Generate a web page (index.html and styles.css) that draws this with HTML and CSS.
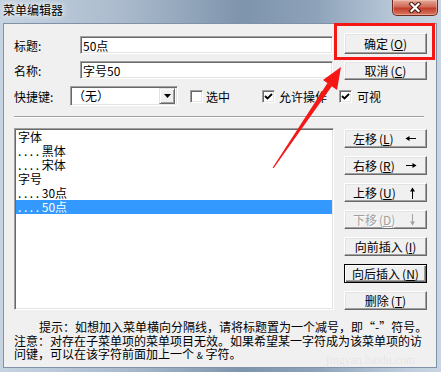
FILE: index.html
```html
<!DOCTYPE html>
<html lang="zh-CN">
<head>
  <meta charset="UTF-8" />
  <meta name="viewport" content="width=device-width, initial-scale=1.0" />
  <title>菜单编辑器</title>
  <link rel="stylesheet" href="styles.css">
</head>
<body>
  <div class="window">
    <div class="titlebar">
      <span class="title">菜单编辑器</span>
      <div class="close-btn">
        <svg width="14" height="11" viewBox="0 0 14 11">
          <path d="M3.5 2 L10.5 9 M10.5 2 L3.5 9" stroke="#4a1710" stroke-width="4.2" stroke-linecap="square" fill="none"/>
          <path d="M3.5 2 L10.5 9 M10.5 2 L3.5 9" stroke="#fff" stroke-width="2.2" stroke-linecap="square" fill="none"/>
        </svg>
      </div>
    </div>

    <div class="client">
      <div class="top">
        <div class="form">
          <div class="row">
            <label class="lbl">标题:</label>
            <input class="field" type="text" value="50点">
          </div>
          <div class="row">
            <label class="lbl">名称:</label>
            <input class="field" type="text" value="字号50">
          </div>
          <div class="row row-opts">
            <label class="lbl lbl-short">快捷键:</label>
            <div class="combo">
              <span class="combo-text">（无）</span>
              <span class="combo-btn">
                <svg width="7" height="4" viewBox="0 0 7 4"><path d="M0 0H7L3.5 4Z" fill="#000"/></svg>
              </span>
            </div>
            <span class="check check-first"><span class="box"></span>选中</span>
            <span class="check check-mid">
              <span class="box"><svg width="9" height="9" viewBox="0 0 9 9"><path d="M1 4 L3.5 6.5 L8 2" stroke="#000" stroke-width="1.8" fill="none"/></svg></span>允许操作
            </span>
            <span class="check check-last">
              <span class="box"><svg width="9" height="9" viewBox="0 0 9 9"><path d="M1 4 L3.5 6.5 L8 2" stroke="#000" stroke-width="1.8" fill="none"/></svg></span>可视
            </span>
          </div>
        </div>
        <div class="btns">
          <button class="btn btn-ok">确定<span class="key">(<u>O</u>)</span></button>
          <button class="btn">取消<span class="key">(<u>C</u>)</span></button>
        </div>
      </div>

      <div class="sep"></div>

      <div class="middle">
        <div class="list">
          <div class="item">字体</div>
          <div class="item"><span class="dots">....</span>黑体</div>
          <div class="item"><span class="dots">....</span>宋体</div>
          <div class="item">字号</div>
          <div class="item"><span class="dots">....</span>30点</div>
          <div class="item selected"><span class="dots">....</span>50点</div>
        </div>
        <div class="btns btns-move">
          <button class="btn btn-arrow">
            <span>左移<span class="key">(<u>L</u>)</span></span>
            <svg width="12" height="9" viewBox="0 0 12 9"><path d="M1 4.5H11" stroke="#000"/><path d="M0.5 4.5L4.5 2V7Z" fill="#000"/></svg>
          </button>
          <button class="btn btn-arrow">
            <span>右移<span class="key">(<u>R</u>)</span></span>
            <svg width="12" height="9" viewBox="0 0 12 9"><path d="M1 4.5H11" stroke="#000"/><path d="M11.5 4.5L7.5 2V7Z" fill="#000"/></svg>
          </button>
          <button class="btn btn-arrow">
            <span>上移<span class="key">(<u>U</u>)</span></span>
            <svg width="9" height="12" viewBox="0 0 9 12"><path d="M4.5 1V12" stroke="#000"/><path d="M4.5 0.5L2 4.5H7Z" fill="#000"/></svg>
          </button>
          <button class="btn btn-arrow btn-disabled">
            <span>下移<span class="key">(<u>D</u>)</span></span>
            <svg width="9" height="12" viewBox="0 0 9 12"><path d="M4.5 0V11" stroke="#a0a0a0"/><path d="M4.5 11.5L2 7.5H7Z" fill="#a0a0a0"/></svg>
          </button>
          <button class="btn">向前插入<span class="key">(<u>I</u>)</span></button>
          <button class="btn btn-default">向后插入<span class="key">(<u>N</u>)</span></button>
          <button class="btn">删除<span class="key">(<u>T</u>)</span></button>
        </div>
      </div>

      <p class="hint hint-first">提示：如想加入菜单横向分隔线，请将标题置为一个减号，即“-”符号。</p>
      <p class="hint">注意：对存在子菜单项的菜单项目无效。如果希望某一字符成为该菜单项的访<br>问键，可以在该字符前面加上一个 <span class="amp">&amp;</span> 字符。</p>
    </div>
  </div>

  <!-- annotation drawn over the screenshot -->
  <svg class="annot" width="441" height="372" viewBox="0 0 441 372">
    <rect x="335.5" y="24.5" width="98" height="34" fill="none" stroke="#f51616" stroke-width="3"/>
    <polygon points="341,67 323,80 337,90" fill="#f51616"/>
    <polygon points="332,86 327.5,83 272.6,167.7 273.6,168.3" fill="#f51616"/>
  </svg>

  <div class="watermark">jingyan.baidu.com</div>
</body>
</html>
```

FILE: styles.css
```css
* {
  box-sizing: border-box;
}

body {
  margin: 0;
  width: 441px;
  height: 372px;
  overflow: hidden;
  position: relative;
  font-family: "Noto Sans CJK SC", sans-serif;
  font-size: 12px;
  color: #000;
  background: linear-gradient(to right, #c6d3e1, #aabacc 28%, #7e94ac 55%, #8ea3ba 72%, #bac9d9 90%, #c9d5e2);
}

.window {
  display: flex;
  flex-direction: column;
  height: 372px;
}

.titlebar {
  height: 23px;
  display: flex;
  justify-content: space-between;
  align-items: flex-start;
  padding-left: 3px;
}

.title {
  line-height: 20px;
  text-shadow: 0 0 4px #fff, 0 0 7px #fff;
}

.close-btn {
  width: 46px;
  height: 16px;
  margin-right: 3px;
  border: 1px solid #6e2b22;
  border-top: none;
  border-radius: 0 0 5px 5px;
  background: linear-gradient(#e6ab9c, #d06a55 45%, #c23f2a 55%, #d8765f);
  box-shadow: inset 0 0 0 1px rgba(255, 210, 200, 0.45);
  display: flex;
  justify-content: center;
  align-items: center;
}

.client {
  flex: 1;
  margin: 0 4px 4px 3px;
  background: #f0f0f0;
  border: 1px solid #7f92a8;
}

/* top area: fields + ok/cancel */
.top {
  display: flex;
  padding: 9px 9px 0 10px;
}

.form {
  width: 319px;
  flex-shrink: 0;
  margin-right: 11px;
  padding-top: 3px;
  display: flex;
  flex-direction: column;
  gap: 7px;
}

.row {
  display: flex;
  align-items: center;
  height: 18px;
  white-space: nowrap;
}

.row-opts {
  height: 20px;
  width: 380px;
  position: relative;
  z-index: 1;
}

.lbl {
  width: 66px;
  flex-shrink: 0;
}

.lbl-short {
  width: 56px;
}

.field {
  width: 253px;
  height: 18px;
  margin: 0;
  padding: 0 2px;
  font: inherit;
  color: #000;
  background: #fff;
  border: 1px solid;
  border-color: #a0a0a0 #fff #fff #a0a0a0;
  box-shadow: inset 1px 1px #696969, inset -1px -1px #e3e3e3;
  outline: none;
}

.combo {
  width: 108px;
  height: 20px;
  flex-shrink: 0;
  display: flex;
  justify-content: space-between;
  align-items: center;
  background: #fff;
  border: 1px solid;
  border-color: #a0a0a0 #fff #fff #a0a0a0;
  box-shadow: inset 1px 1px #696969, inset -1px -1px #e3e3e3;
  padding: 2px;
}

.combo-text {
  line-height: 16px;
}

.combo-btn {
  width: 16px;
  height: 16px;
  display: flex;
  justify-content: center;
  align-items: center;
  background: #f0f0f0;
  border: 1px solid;
  border-color: #e3e3e3 #696969 #696969 #e3e3e3;
  box-shadow: inset 1px 1px #fff, inset -1px -1px #a0a0a0;
}

.check {
  display: flex;
  align-items: center;
  flex-shrink: 0;
  gap: 3px;
}

.check-first {
  margin-left: 12px;
}

.check-mid {
  margin-left: 32px;
  gap: 4px;
}

.check-last {
  margin-left: 12px;
  gap: 5px;
}

.box {
  width: 13px;
  height: 13px;
  flex-shrink: 0;
  display: flex;
  justify-content: center;
  align-items: center;
  background: #fff;
  border: 1px solid;
  border-color: #a0a0a0 #fff #fff #a0a0a0;
  box-shadow: inset 1px 1px #696969, inset -1px -1px #e3e3e3;
}

/* buttons */
.btns {
  width: 83px;
  flex-shrink: 0;
  display: flex;
  flex-direction: column;
  gap: 7px;
}

.btn {
  height: 19px;
  margin: 0;
  padding: 0;
  font: inherit;
  color: #000;
  background: #f0f0f0;
  border: 1px solid;
  border-color: #fff #696969 #696969 #fff;
  box-shadow: inset -1px -1px #a0a0a0, inset 1px 1px #e3e3e3;
  display: flex;
  justify-content: center;
  align-items: center;
  line-height: 16px;
}

.btn-ok {
  height: 21px;
}

.key {
  margin-left: 2px;
}

.btn-arrow {
  justify-content: space-between;
  padding: 0 9px 0 8px;
}

.btn-disabled {
  color: #a0a0a0;
  text-shadow: 1px 1px #fff;
}

.btn-default {
  border: 1px solid #000;
  box-shadow: inset 1px 1px #fff, inset -1px -1px #696969, inset -2px -2px #a0a0a0;
}

.sep {
  height: 2px;
  margin: 10px 12px 0 10px;
  border-top: 1px solid #a0a0a0;
  border-bottom: 1px solid #fff;
}

/* list + move buttons */
.middle {
  display: flex;
  margin-top: 10px;
  padding: 0 9px 0 10px;
}

.list {
  width: 320px;
  height: 182px;
  margin-right: 10px;
  padding-top: 1px;
  background: #fff;
  border: 1px solid;
  border-color: #a0a0a0 #fff #fff #a0a0a0;
  box-shadow: inset 1px 1px #696969, inset -1px -1px #e3e3e3;
}

.item {
  height: 14px;
  line-height: 14px;
  margin-left: 1px;
  margin-right: 1px;
  padding-left: 2px;
  white-space: nowrap;
}

.item.selected {
  background: #3399ff;
  color: #fff;
}

.dots {
  letter-spacing: 2.6px;
}

.btns-move {
  padding-top: 1px;
  gap: 8px;
}

/* hints */
.hint {
  margin: 0;
  padding-left: 10px;
  line-height: 13px;
  white-space: nowrap;
}

.hint-first {
  margin-top: 10px;
  padding-left: 35px;
  line-height: 14px;
}

.amp {
  font-size: 9px;
}

.annot {
  position: absolute;
  top: 0;
  left: 0;
  pointer-events: none;
  z-index: 2;
}

.watermark {
  position: absolute;
  left: 326px;
  top: 353px;
  font-family: "Liberation Serif", serif;
  font-size: 12px;
  color: #e2e2e2;
  text-shadow: 0 0 1px #fff;
}
```
